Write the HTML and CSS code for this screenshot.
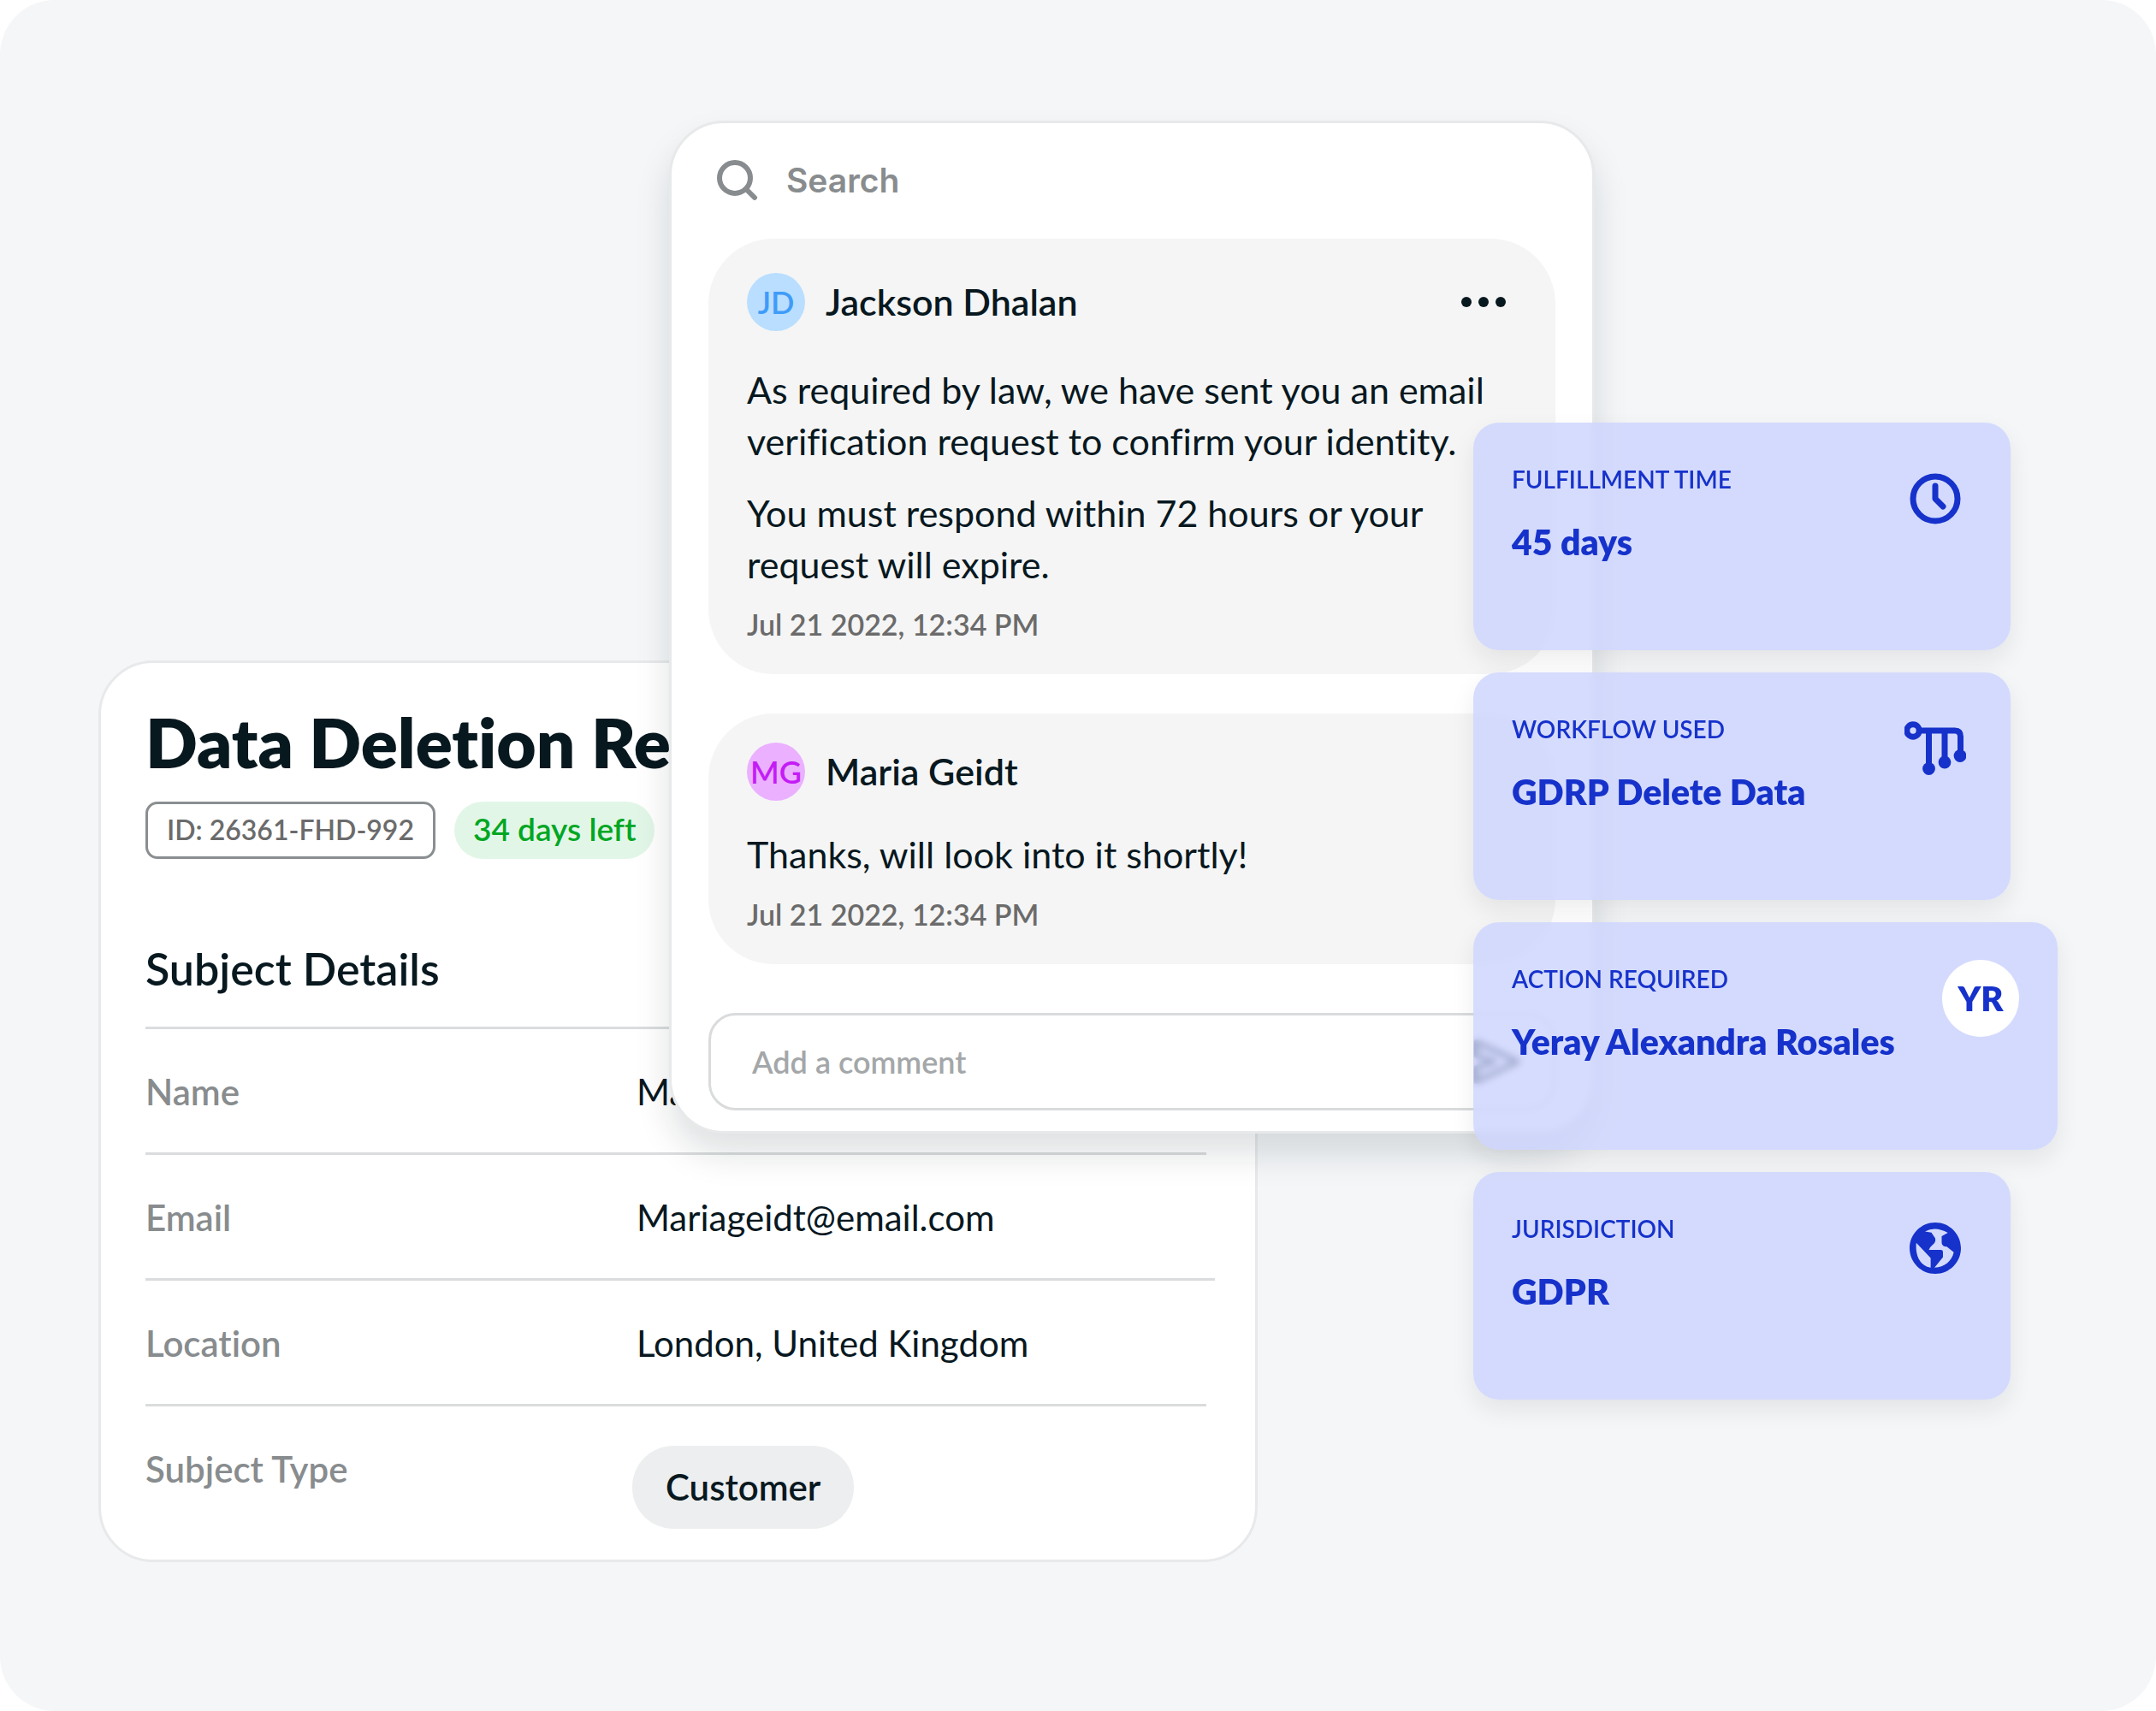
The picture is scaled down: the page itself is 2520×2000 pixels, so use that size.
FILE: index.html
```html
<!DOCTYPE html>
<html lang="en">
<head>
<meta charset="utf-8">
<title>Data Deletion Request</title>
<link rel="stylesheet" href="styles.css">
</head>
<body>
<main class="stage">
  <section class="panel request">
    <h1 class="request-title">Data Deletion Request</h1>
    <div class="tags">
      <span class="tag tag-id">ID: 26361-FHD-992</span>
      <span class="tag tag-due">34 days left</span>
    </div>
    <h2 class="details-title">Subject Details</h2>
    <dl class="details">
      <div class="row"><dt>Name</dt><dd>Maria Geidt</dd></div>
      <div class="row row-wide"><dt>Email</dt><dd>Mariageidt@email.com</dd></div>
      <div class="row"><dt>Location</dt><dd>London, United Kingdom</dd></div>
      <div class="row row-last"><dt>Subject Type</dt><dd class="chip">Customer</dd></div>
    </dl>
  </section>

  <section class="panel chat">
    <label class="search">
      <svg class="search-icon" viewBox="0 0 48 48" aria-hidden="true"><circle cx="21" cy="21" r="18" /><path d="M34 34l10 10" /></svg>
      <input class="search-input" type="search" placeholder="Search" aria-label="Search">
    </label>

    <article class="comment">
      <header class="comment-head">
        <span class="avatar avatar-blue">JD</span>
        <h3 class="author">Jackson Dhalan</h3>
        <button class="menu" type="button" aria-label="More options">
          <svg class="menu-icon" viewBox="0 0 52 12" aria-hidden="true"><circle cx="6" cy="6" r="6" /><circle cx="26" cy="6" r="6" /><circle cx="46" cy="6" r="6" /></svg>
        </button>
      </header>
      <div class="comment-body">
        <p>As required by law, we have sent you an email<br>verification request to confirm your identity.</p>
        <p>You must respond within 72 hours or your<br>request will expire.</p>
      </div>
      <time class="date" datetime="2022-07-21T12:34">Jul 21 2022, 12:34 PM</time>
    </article>

    <article class="comment">
      <header class="comment-head">
        <span class="avatar avatar-pink">MG</span>
        <h3 class="author">Maria Geidt</h3>
      </header>
      <div class="comment-body">
        <p>Thanks, will look into it shortly!</p>
      </div>
      <time class="date" datetime="2022-07-21T12:34">Jul 21 2022, 12:34 PM</time>
    </article>

    <form class="composer">
      <input class="composer-input" type="text" placeholder="Add a comment" aria-label="Add a comment">
      <button class="send" type="button" aria-label="Send">
        <svg class="send-icon" viewBox="0 0 64 64" aria-hidden="true"><path d="M9 9L57 32L9 55V39L30 32L9 25Z" /></svg>
      </button>
    </form>
  </section>

  <section class="facts">
    <article class="fact">
      <div class="fact-text">
        <h4 class="fact-label">FULFILLMENT TIME</h4>
        <p class="fact-value">45 days</p>
      </div>
      <svg class="fact-icon" viewBox="0 0 72 72" aria-hidden="true"><circle class="line" cx="36" cy="36" r="26" /><path class="line" d="M36 21V36L45 45" /></svg>
    </article>
    <article class="fact">
      <div class="fact-text">
        <h4 class="fact-label">WORKFLOW USED</h4>
        <p class="fact-value">GDRP Delete Data</p>
      </div>
      <svg class="fact-icon" viewBox="0 0 72 72" aria-hidden="true"><circle class="line" cx="10" cy="15" r="7.2" /><path class="line" d="M19 15H59Q65.500 15 65.500 22V44M28.500 15V58M47 15V51" /><circle cx="28.500" cy="59.500" r="7.400" /><circle cx="47" cy="52" r="7.400" /><circle cx="65" cy="44.500" r="7.400" /></svg>
    </article>
    <article class="fact fact-wide">
      <div class="fact-text">
        <h4 class="fact-label">ACTION REQUIRED</h4>
        <p class="fact-value">Yeray Alexandra Rosales</p>
      </div>
      <span class="assignee">YR</span>
    </article>
    <article class="fact">
      <div class="fact-text">
        <h4 class="fact-label">JURISDICTION</h4>
        <p class="fact-value">GDPR</p>
      </div>
      <svg class="fact-icon" viewBox="0 0 24 24" aria-hidden="true"><path d="M12 2C6.480 2 2 6.480 2 12s4.480 10 10 10 10-4.480 10-10S17.520 2 12 2zM4.600 9.900L10.200 15.800V19.600C6.500 18.900 4.100 15.500 4.600 9.900zM19.200 13.600C18.500 17 15.600 19.500 11.700 19.600L15 15.500V13.500Q15 12.700 14.200 12.700H9.500Q10 11.500 11 10.700Q12.300 9.700 12 8.200L10.500 5.900L8 5.500Q12 3.200 16.900 6L14.500 7.300V10Q14.700 11.400 16.500 11.400Z" /></svg>
    </article>
  </section>
</main>
</body>
</html>
```
FILE: styles.css
```css
* {
  box-sizing: border-box;
  margin: 0;
  padding: 0;
}

body {
  background: #fff;
  color: #08181f;
  font-family: Lato, "Open Sans", sans-serif;
  font-size: 43px;
  font-variant-ligatures: none;
  line-height: 60px;
}

input,
button {
  border: 0;
  background: none;
  font: inherit;
  outline: 0;
}

/* Three groups share one row; their column spans overlap. */
.stage {
  display: grid;
  grid-template-columns: 115fr 667fr 688fr 252fr 142fr 486fr 55fr 115fr;
  align-items: start;
  min-height: 100vh;
  background: #f4f6f8;
  border-radius: 64px;
}

.panel {
  background: #fff;
  border: 3px solid #e7e9ea;
  border-radius: 64px;
}

/* Request */
.request {
  grid-row: 1;
  grid-column: 2 / 4;
  margin-top: 772px;
  padding: 44px 57px 36px 52px;
}

.request-title {
  font-size: 80px;
  font-weight: 800;
  line-height: 96px;
  white-space: nowrap;
}

.tags {
  display: flex;
  gap: 22px;
  margin-top: 22px;
}

.tag {
  height: 67px;
  padding: 0 22px;
  font-weight: 600;
}

.tag-id {
  border: 3px solid #8a8e90;
  border-radius: 14px;
  color: #6b6b6b;
  font-size: 32px;
  line-height: 60px;
}

.tag-due {
  border-radius: 34px;
  background: #e2f6e8;
  color: #00a622;
  font-size: 37px;
  line-height: 64px;
}

.details-title {
  margin-top: 98px;
  padding-bottom: 38px;
  border-bottom: 3px solid #dadcdd;
  font-size: 52px;
  font-weight: 600;
  line-height: 60px;
}

.row {
  display: grid;
  grid-template-columns: 574px 1fr;
  height: 147px;
  padding-top: 43px;
  border-bottom: 3px solid #dadcdd;
  font-size: 42px;
}

.row-wide {
  margin-right: -10px;
}

.row dt {
  color: #888c8e;
  font-weight: 600;
}

.row-last {
  height: auto;
  border-bottom: 0;
}

.chip {
  justify-self: start;
  margin: 3px 0 0 -5px;
  padding: 0 39px;
  border-radius: 48px;
  background: #eceeef;
  font-weight: 600;
  line-height: 97px;
}

/* Conversation */
.chat {
  grid-row: 1;
  grid-column: 3 / 6;
  margin-top: 141px;
  padding: 37px 43px 24px;
  box-shadow: 0 24px 40px rgba(8, 24, 32, 0.13);
}

.search {
  display: flex;
  align-items: center;
  gap: 33px;
  height: 60px;
  margin: 0 10px 38px;
}

.search-icon {
  width: 48px;
  height: 48px;
  fill: none;
  stroke: #888c8e;
  stroke-width: 6;
  stroke-linecap: round;
}

.search-input {
  flex: 1;
  font-family: Inter, sans-serif;
  font-size: 39px;
  font-weight: 600;
}

.search-input::placeholder {
  color: #888c8e;
  opacity: 1;
}

.comment {
  margin-bottom: 46px;
  padding: 34px 45px 38px;
  border-radius: 76px;
  background: #f5f5f5;
}

.comment-head {
  display: flex;
  align-items: center;
  gap: 24px;
}

.avatar {
  width: 68px;
  height: 68px;
  border-radius: 50%;
  font-size: 36px;
  font-weight: 600;
  line-height: 68px;
  text-align: center;
}

.avatar-blue {
  background: #b9deff;
  color: #3f9cf8;
}

.avatar-pink {
  background: #ebb0ff;
  color: #c41cf5;
}

.author {
  flex: 1;
  font-size: 43px;
  font-weight: 600;
}

.menu {
  display: flex;
  align-items: center;
  height: 80px;
  padding-right: 13px;
}

.menu-icon {
  width: 52px;
  height: 12px;
  fill: #08181f;
}

.comment-body {
  display: grid;
  gap: 24px;
  margin: 33px 0 20px;
  white-space: nowrap;
}

.date {
  display: block;
  color: #6b6b6b;
  font-size: 34px;
  font-weight: 600;
  line-height: 40px;
}

.composer {
  display: flex;
  align-items: center;
  height: 114px;
  margin-top: 57px;
  padding: 0 34px 0 48px;
  border: 3px solid #d9dbdc;
  border-radius: 32px;
}

.composer-input {
  flex: 1;
  font-size: 36px;
  font-weight: 600;
}

.composer-input::placeholder {
  color: #a4a7a9;
  opacity: 1;
}

.send {
  display: flex;
}

.send-icon {
  width: 64px;
  height: 64px;
  fill: none;
  stroke: #08181f;
  stroke-width: 6;
  stroke-linejoin: round;
}

/* Facts */
.facts {
  display: grid;
  grid-row: 1;
  grid-column: 5 / 8;
  grid-template-columns: 628fr 55fr;
  gap: 26px 0;
  margin-top: 494px;
  color: #1632cb;
}

.fact {
  display: flex;
  grid-column: 1;
  justify-content: space-between;
  min-height: 266px;
  padding: 44px 45px;
  border-radius: 30px;
  background: rgba(204, 211, 254, 0.8);
  box-shadow: 0 12px 28px rgba(20, 30, 20, 0.08);
  backdrop-filter: blur(4px);
}

.fact-wide {
  grid-column: 1 / 3;
}

.fact-label {
  font-size: 28px;
  font-weight: 600;
  line-height: 44px;
}

.fact-value {
  margin-top: 22px;
  font-size: 41px;
  font-weight: 800;
  white-space: nowrap;
}

.fact-icon {
  width: 72px;
  height: 72px;
  margin: 9px 7px;
  fill: currentColor;
}

.fact-icon .line {
  fill: none;
  stroke: currentColor;
  stroke-width: 7;
  stroke-linecap: round;
  stroke-linejoin: round;
}

.assignee {
  width: 90px;
  height: 90px;
  border-radius: 50%;
  background: #fff;
  font-size: 40px;
  font-weight: 800;
  line-height: 90px;
  text-align: center;
}
```
